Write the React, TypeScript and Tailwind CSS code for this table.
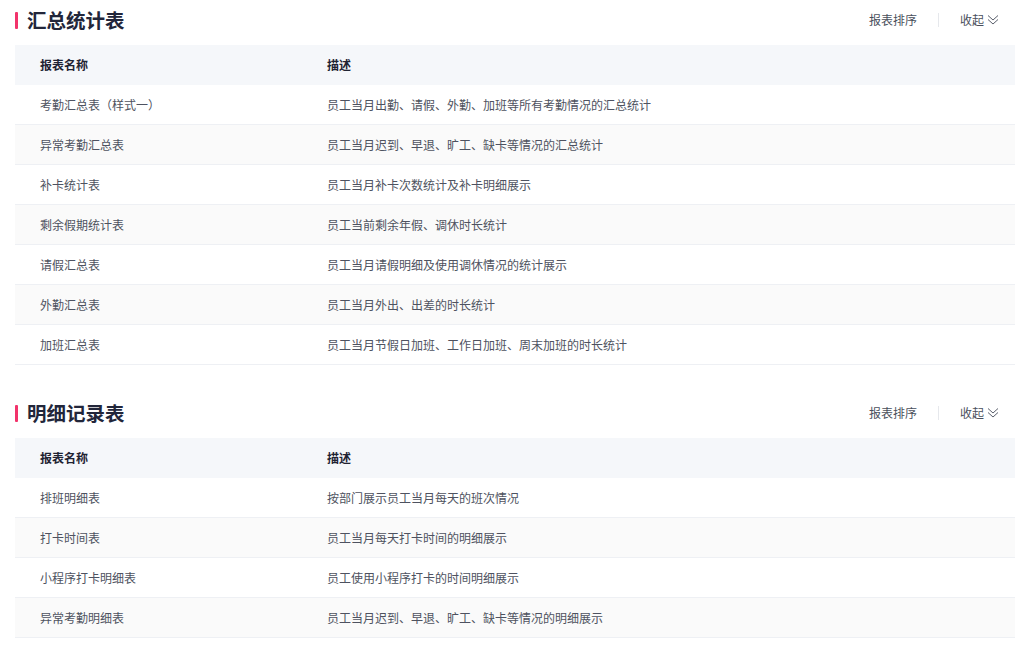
import React from "react";

type Row = { name: string; desc: string };

const summary: Row[] = [
  { name: "考勤汇总表（样式一）", desc: "员工当月出勤、请假、外勤、加班等所有考勤情况的汇总统计" },
  { name: "异常考勤汇总表", desc: "员工当月迟到、早退、旷工、缺卡等情况的汇总统计" },
  { name: "补卡统计表", desc: "员工当月补卡次数统计及补卡明细展示" },
  { name: "剩余假期统计表", desc: "员工当前剩余年假、调休时长统计" },
  { name: "请假汇总表", desc: "员工当月请假明细及使用调休情况的统计展示" },
  { name: "外勤汇总表", desc: "员工当月外出、出差的时长统计" },
  { name: "加班汇总表", desc: "员工当月节假日加班、工作日加班、周末加班的时长统计" },
];

const detail: Row[] = [
  { name: "排班明细表", desc: "按部门展示员工当月每天的班次情况" },
  { name: "打卡时间表", desc: "员工当月每天打卡时间的明细展示" },
  { name: "小程序打卡明细表", desc: "员工使用小程序打卡的时间明细展示" },
  { name: "异常考勤明细表", desc: "员工当月迟到、早退、旷工、缺卡等情况的明细展示" },
];

const ChevronsDown = () => (
  <svg width="12" height="12" viewBox="0 0 12 12" fill="none" stroke="currentColor" strokeWidth="1">
    <path d="M1 1.5 L6 6 L11 1.5" />
    <path d="M1 5.5 L6 10 L11 5.5" />
  </svg>
);

const Section = ({ title, rows, className = "" }: { title: string; rows: Row[]; className?: string }) => (
  <section className={className}>
    <div className="flex items-center justify-between h-[40px] mb-[5px]">
      <div className="flex items-center">
        <span className="w-[3px] h-[17px] bg-[#f2336b] rounded-[1px]" />
        <h2 className="ml-[9px] text-[19.5px] font-bold text-[#22263a] leading-none">{title}</h2>
      </div>
      <div className="flex items-center text-[12px] text-[#4a4f5c] pr-[17px]">
        <span>报表排序</span>
        <span className="mx-[21px] w-px h-[14px] bg-[#e6e8ec]" />
        <span>收起</span>
        <span className="ml-[3px] text-[#5a5f6c]">
          <ChevronsDown />
        </span>
      </div>
    </div>
    <div className="text-[12px] mr-px">
      <div className="flex items-center h-[40px] bg-[#f5f7fa] font-bold text-[#1f2333]">
        <div className="w-[287px] pl-[25px]">报表名称</div>
        <div className="pl-[25px]">描述</div>
      </div>
      {rows.map((r, i) => (
        <div
          key={r.name}
          className={`flex items-center h-[40px] border-b border-[#eef0f4] text-[#4e5260] ${
            i % 2 === 1 ? "bg-[#fafafa]" : "bg-white"
          }`}
        >
          <div className="w-[287px] pl-[25px]">{r.name}</div>
          <div className="pl-[25px]">{r.desc}</div>
        </div>
      ))}
    </div>
  </section>
);

export default function App() {
  return (
    <div
      className="w-[1031px] h-[648px] bg-white px-[15px] overflow-hidden"
      style={{ fontFamily: '"Noto Sans CJK SC", "Noto Sans", sans-serif' }}
    >
      <Section title="汇总统计表" rows={summary} />
      <Section title="明细记录表" rows={detail} className="mt-[28px]" />
    </div>
  );
}
